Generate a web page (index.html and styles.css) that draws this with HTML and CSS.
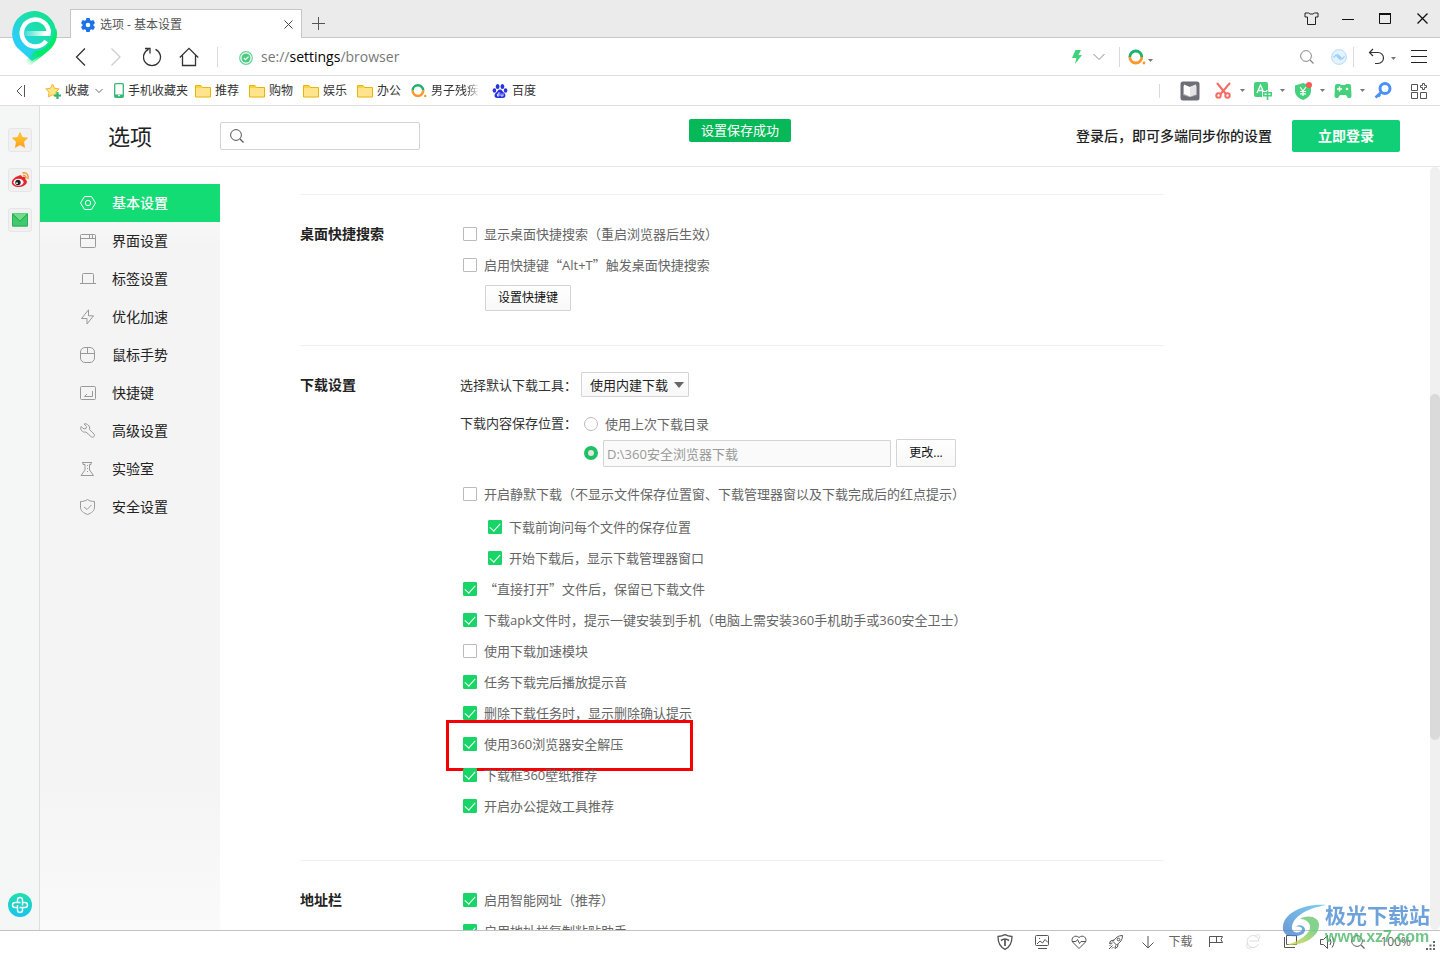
FILE: index.html
```html
<!DOCTYPE html>
<html lang="zh-CN">
<head>
<meta charset="utf-8">
<title>选项 - 基本设置</title>
<link rel="stylesheet" href="styles.css">
</head>
<body>
<svg class="defs" aria-hidden="true">
  <defs>
    <symbol id="folder" viewBox="0 0 16 16"><path d="M.5 14V2.500h5.500l1.500 2h8V14z" fill="#ffe48c" stroke="#eab308"/><path d="M1 3h4.800l1.500 2H1z" fill="#fdd23c"/></symbol>
    <symbol id="quest" viewBox="0 0 18 16"><path d="M1.800 8a6 6 0 0 1 12 0" fill="none" stroke="#19b36b" stroke-width="2.800"/><path d="M1.800 8a6 6 0 0 0 12 0" fill="none" stroke="#fb9a2c" stroke-width="2.800"/><circle cx="16" cy="14" r="1.400" fill="#fb9a2c"/></symbol>
    <symbol id="caret" viewBox="0 0 5 3"><path d="M0 0h5L2.500 3z" fill="#777"/></symbol>
    <symbol id="lens" viewBox="0 0 14 14"><circle cx="6" cy="6" r="5.400" fill="none" stroke="currentColor"/><path d="M10 10l3.500 3.500" stroke="currentColor" stroke-width="1.200"/></symbol>
    <linearGradient id="brand" x1="0" y1="1" x2="1" y2="0"><stop offset="0" stop-color="#28d0ff"/><stop offset=".3" stop-color="#28d0f0"/><stop offset=".6" stop-color="#1cdfae"/><stop offset="1" stop-color="#0be383"/></linearGradient>
    <linearGradient id="brandTail" gradientUnits="userSpaceOnUse" x1="36" y1="36" x2="18" y2="56"><stop offset="0" stop-color="#02ea68"/><stop offset=".4" stop-color="#02ea68"/><stop offset="1" stop-color="#02ea68" stop-opacity="0"/></linearGradient>
    <linearGradient id="brandBar" x1="0" x2="1"><stop offset="0" stop-color="#fff" stop-opacity=".1"/><stop offset=".8" stop-color="#fff"/></linearGradient>
    <linearGradient id="gold" x1="0" y1="0" x2="0" y2="1"><stop offset="0" stop-color="#ffd32e"/><stop offset="1" stop-color="#ff9d1c"/></linearGradient>
    <linearGradient id="aqua" x1="0" y1="0" x2="0" y2="1"><stop offset="0" stop-color="#20e0ac"/><stop offset="1" stop-color="#17c4ee"/></linearGradient>
    <linearGradient id="swooshBlue" x1="0" y1="1" x2="1" y2="0"><stop offset="0" stop-color="#477fca"/><stop offset="1" stop-color="#5bc4ef"/></linearGradient>
    <linearGradient id="swooshGreen" x1="0" y1="1" x2="1" y2="0"><stop offset="0" stop-color="#e5d83e"/><stop offset=".7" stop-color="#66c873"/></linearGradient>
  </defs>
</svg>

<header class="titlebar">
  <svg class="brand" width="48" height="58" viewBox="0 0 48 58" aria-hidden="true">
    <path d="M23.500 1A22.500 22.500 0 0 0 6 37.500L21 51l17-11a22.500 22.500 0 0 0-14.500-39z" fill="url(#brand)"/>
    <path d="M45 18c3 9-1 18-9 24L20 55l-10 1 14-15c9 0 17-7 21-23z" fill="url(#brandTail)"/>
    <path d="M37.800 23.500a13.500 13.500 0 1 0-2.600 7.500" fill="none" stroke="#fff" stroke-width="4.500"/>
    <path d="M13 21h26.500v5H13z" fill="url(#brandBar)"/>
  </svg>
  <div class="tab">
    <svg width="14" height="14" viewBox="0 0 14 14"><path d="M5.300 0h3.400l.4 2 1.300.8 2-.7L14 5l-1.500 1.400v1.300L14 9l-1.700 2.900-2-.7-1.200.8-.4 2H5.300l-.4-2-1.200-.8-2 .7L0 9l1.500-1.300V6.400L0 5l1.700-2.900 2 .7L5 2zM7 4.700a2.300 2.300 0 1 0 0 4.600 2.300 2.300 0 0 0 0-4.600z" fill="#1a73e8" fill-rule="evenodd"/></svg>
    <span class="tab-title">选项 - 基本设置</span>
    <button class="icon-btn" aria-label="关闭标签"><svg width="9" height="9" viewBox="0 0 9 9"><path d="M.5.500l8 8M8.500.500l-8 8" stroke="#444"/></svg></button>
  </div>
  <button class="icon-btn new-tab" aria-label="新标签"><svg width="13" height="13" viewBox="0 0 13 13"><path d="M6.500 0v13M0 6.500h13" stroke="#555"/></svg></button>
  <div class="window-controls">
    <button class="icon-btn" aria-label="皮肤"><svg width="15" height="13" viewBox="0 0 15 13"><path d="M1 1h3.500l1.500 1h3l1.500-1H14v4h-2.500v7.500h-8V5H1z" fill="none" stroke="#222"/></svg></button>
    <button class="icon-btn" aria-label="最小化"><svg width="12" height="13" viewBox="0 0 12 13"><path d="M0 7.500h12" stroke="#111"/></svg></button>
    <button class="icon-btn" aria-label="最大化"><svg width="12" height="11" viewBox="0 0 12 11"><path d="M.5 1v9.500h11V1" fill="none" stroke="#111"/><path d="M0 1h12" stroke="#111" stroke-width="2"/></svg></button>
    <button class="icon-btn" aria-label="关闭"><svg width="11" height="11" viewBox="0 0 11 11"><path d="M.5.500l10 10M10.500.500l-10 10" stroke="#111" stroke-width="1.300"/></svg></button>
  </div>
</header>

<div class="addressbar">
  <div class="nav-buttons">
    <button class="icon-btn" aria-label="后退"><svg width="20" height="20" viewBox="0 0 20 20"><path d="M14 1.500L5.500 10l8.500 8.500" fill="none" stroke="#333" stroke-width="1.300"/></svg></button>
    <button class="icon-btn" aria-label="前进"><svg width="20" height="20" viewBox="0 0 20 20"><path d="M4.500 1.500L13 10l-8.500 8.500" fill="none" stroke="#ccc" stroke-width="1.300"/></svg></button>
    <button class="icon-btn" aria-label="刷新"><svg width="20" height="20" viewBox="0 0 20 20"><path d="M12.500 2.300A8.500 8.500 0 1 1 5.500 2.300M2 1.500h5v5" fill="none" stroke="#333" stroke-width="1.300"/></svg></button>
    <button class="icon-btn" aria-label="主页"><svg width="20" height="20" viewBox="0 0 20 20"><path d="M.8 10.500L10 1.300l9.200 9.200M3.500 8.500v10h13v-10" fill="none" stroke="#333" stroke-width="1.300"/></svg></button>
  </div>
  <span class="divider"></span>
  <svg class="secure" width="14" height="14" viewBox="0 0 14 14"><circle cx="7" cy="7" r="6.300" fill="none" stroke="#62d493" stroke-width="1.200"/><circle cx="7" cy="7" r="4.500" fill="#4acb80"/><path d="M4.800 7l1.700 1.600 3-3" fill="none" stroke="#fff" stroke-width="1.200"/></svg>
  <span class="url">se://<b>settings</b>/browser</span>
  <div class="address-tools">
    <svg width="10" height="14" viewBox="0 0 10 14"><path d="M3.500 0H9L6.500 5H10L3 14l1.300-6H0z" fill="#3fd17b"/></svg>
    <svg class="tool-chevron" width="12" height="8" viewBox="0 0 12 8"><path d="M.5 1L6 6.500 11.500 1" fill="none" stroke="#888"/></svg>
    <span class="divider"></span>
    <svg class="tool-quest" width="18" height="16"><use href="#quest"/></svg>
    <svg class="quest-caret" width="5" height="3"><use href="#caret"/></svg>
  </div>
  <svg class="search-lens" width="14" height="14"><use href="#lens"/></svg>
  <svg class="sync" width="16" height="16" viewBox="0 0 16 16"><circle cx="8" cy="8" r="7.400" fill="#e4f3ff" stroke="#b5dbff"/><path d="M2.500 8.500L5 6l5 5M13.500 7.500L11 10 6 5" fill="none" stroke="#9ccdff" stroke-width="1.200"/><path d="M8 6l2 2-2 2-2-2z" fill="#9ccdff"/></svg>
  <span class="divider sync-divider"></span>
  <button class="icon-btn" aria-label="恢复"><svg width="17" height="17" viewBox="0 0 17 17"><path d="M5 1L1.500 4.500 5 8M1.500 4.500h8.500a5.500 5.500 0 0 1 0 11H7" fill="none" stroke="#333" stroke-width="1.200"/></svg></button>
  <svg class="undo-caret" width="5" height="3"><use href="#caret"/></svg>
  <button class="icon-btn menu" aria-label="菜单"><svg width="16" height="13" viewBox="0 0 16 13"><path d="M0 .5h16M0 6.500h16M0 12.500h16" stroke="#222"/></svg></button>
</div>

<nav class="bookmarks" aria-label="收藏栏">
  <button class="icon-btn collapse" aria-label="收起"><svg width="10" height="12" viewBox="0 0 10 12"><path d="M6 1L1 6l5 5M8.500 0v12" fill="none" stroke="#555"/></svg></button>
  <a class="bookmark" href="#"><svg width="16" height="16" viewBox="0 0 16 16"><path d="M7.500 1l2 4.300 4.700.6-3.400 3.300.8 4.800-4.100-2.200L3.300 14l.8-4.800L.7 5.900l4.700-.6z" fill="#ffe680" stroke="#efb63b"/><path d="M12.500 9v7M9 12.500h7" stroke="#34b56d" stroke-width="2.200"/></svg><span>收藏</span><svg class="fav-chevron" width="8" height="6" viewBox="0 0 8 6"><path d="M.5 1L4 4.500 7.500 1" fill="none" stroke="#666"/></svg></a>
  <a class="bookmark phone" href="#"><svg width="10" height="15" viewBox="0 0 10 15"><rect x=".7" y=".7" width="8.600" height="13.600" rx="1" fill="#fff" stroke="#35b870" stroke-width="1.300"/><path d="M1 11.500h8V14H1z" fill="#35b870"/><path d="M4 12.700h2" stroke="#fff"/></svg><span>手机收藏夹</span></a>
  <a class="bookmark" href="#"><svg width="16" height="16"><use href="#folder"/></svg><span>推荐</span></a>
  <a class="bookmark" href="#"><svg width="16" height="16"><use href="#folder"/></svg><span>购物</span></a>
  <a class="bookmark" href="#"><svg width="16" height="16"><use href="#folder"/></svg><span>娱乐</span></a>
  <a class="bookmark" href="#"><svg width="16" height="16"><use href="#folder"/></svg><span>办公</span></a>
  <a class="bookmark" href="#"><svg width="16" height="16" viewBox="0 0 18 17"><use href="#quest" width="18" height="16"/></svg><span class="fade">男子残疾</span></a>
  <a class="bookmark" href="#"><svg width="16" height="16" viewBox="0 0 16 16" fill="#2932e1"><ellipse cx="5.600" cy="3.500" rx="1.900" ry="2.600"/><ellipse cx="10.400" cy="3.500" rx="1.900" ry="2.600"/><ellipse cx="2.400" cy="7.500" rx="1.800" ry="2.300"/><ellipse cx="13.600" cy="7.500" rx="1.800" ry="2.300"/><path d="M8 6.500c2 0 2.500 2 4 3.300 2.500 2.200 1.500 5.200-1 5.200H5c-2.500 0-3.500-3-1-5.200C5.500 8.500 6 6.500 8 6.500z"/><path d="M7 9v4H5.500v-2H7M9 10.500v2.500h2v-2.500" fill="none" stroke="#fff" stroke-width=".8"/></svg><span>百度</span></a>
  <div class="plugins">
    <span class="divider"></span>
    <button class="icon-btn reader" aria-label="阅读"><svg width="20" height="20" viewBox="0 0 20 20"><rect x=".5" y=".5" width="19" height="19" rx="2.500" fill="#6c6f78"/><path d="M3 5l2-1v9l5 2 5-2V4l2 1v9l-6 2H9l-6-2z" fill="#a9abb0"/><path d="M4 3.500l6 2.500 6-2.500V13l-6 2.500L4 13z" fill="#fff"/><path d="M10 6l6-2.500V13l-6 2.500z" fill="#e4e4e4"/></svg></button>
    <button class="icon-btn plugin" aria-label="截图"><svg width="18" height="18" viewBox="0 0 18 18" fill="none" stroke="#fa6b63" stroke-width="2"><path d="M3 1l9 11M16 1L6.500 12"/><circle cx="4.500" cy="13.500" r="2.200"/><circle cx="13.500" cy="13.500" r="2.200"/></svg><svg width="5" height="3"><use href="#caret"/></svg></button>
    <button class="icon-btn plugin" aria-label="翻译"><svg width="18" height="18" viewBox="0 0 18 18"><rect width="14" height="15" rx="2" fill="#45d07c"/><path d="M3 11l3.500-8L10 11M4.500 8.500h4" fill="none" stroke="#fff" stroke-width="1.300"/><path d="M9.500 10.500h8v3.500h-8zM13.500 8v10" fill="#fff" stroke="#fff" stroke-width="3"/><path d="M9.700 10.700h7.600v3H9.700zM13.500 8.500V18" fill="none" stroke="#45d07c" stroke-width="1.600"/></svg><svg width="5" height="3"><use href="#caret"/></svg></button>
    <button class="icon-btn plugin" aria-label="网购"><svg width="18" height="18" viewBox="0 0 18 18"><path d="M9 1l8 2.500V9c0 4-3.500 7.500-8 9-4.500-1.500-8-5-8-9V3.500z" fill="#45d07c"/><path d="M6 5l3 4 3-4M9 9v5M6 9.500h6M6 11.800h6" fill="none" stroke="#fff" stroke-width="1.200"/><circle cx="15" cy="3" r="3" fill="#fc5a52"/></svg><svg width="5" height="3"><use href="#caret"/></svg></button>
    <button class="icon-btn plugin" aria-label="游戏"><svg width="18" height="18" viewBox="0 0 18 18"><path d="M3 2h3l1 1h4l1-1h3q2 0 2 2l.5 10q0 2-2 2H14l-2-3h-6l-2 3H2.500q-2 0-2-2L1 4q0-2 2-2z" fill="#45d07c"/><path d="M5.500 4.500v5M3 7h5" stroke="#fff" stroke-width="1.400"/><circle cx="13" cy="7" r="1.300" fill="#fff"/></svg><svg width="5" height="3"><use href="#caret"/></svg></button>
    <button class="icon-btn key" aria-label="登录管家"><svg width="18" height="18" viewBox="0 0 18 18" fill="none" stroke="#4a90f8"><circle cx="11" cy="6.500" r="5" stroke-width="3"/><path d="M7.500 10L1.500 15.500M4 12.500l2 2" stroke-width="2.700"/></svg></button>
    <button class="icon-btn grid" aria-label="扩展中心"><svg width="16" height="16" viewBox="0 0 16 16" fill="none" stroke="#555"><path d="M.5 1.500h6v6h-6zM.5 9.500h6v6h-6zM9.500 9.500h6v6h-6z"/><path d="M11.500.500h2v2h2v2h-2v2h-2v-2h-2v-2h2z"/></svg></button>
  </div>
</nav>

<main class="workspace">
  <aside class="rail">
    <button class="rail-btn" aria-label="收藏"><svg width="16" height="16" viewBox="0 0 16 16"><path d="M8 .5l2.300 5 5.200.6-3.900 3.700 1.100 5.600L8 12.800l-4.700 2.600 1.100-5.600L.5 6.100l5.200-.6z" fill="url(#gold)" stroke="#f5a623" stroke-width=".6"/></svg></button>
    <button class="rail-btn" aria-label="微博"><svg width="18" height="18" viewBox="0 0 18 18"><path d="M7 5c2-1 4-1 4 1 3-.8 4 .5 3.300 2.300C18 10.500 15 16 8 16 3.500 16 .8 14 .8 11.500.800 9 4 6 7 5z" fill="#e6242b"/><ellipse cx="7.500" cy="11.300" rx="5" ry="3.500" fill="#fff"/><circle cx="7" cy="11.500" r="2.700" fill="#222"/><circle cx="6" cy="12.200" r=".9" fill="#fff"/><path d="M12 4.500c2-.5 3.300 1 2.800 3M11.500 2c4-1 6.500 2 5.300 6" fill="none" stroke="#f4962b" stroke-width="1.400"/></svg></button>
    <button class="rail-btn" aria-label="邮箱"><svg width="16" height="14" viewBox="0 0 16 14"><rect width="16" height="13.500" rx="1" fill="#3fca6b"/><path d="M.5.500h15L8 8z" fill="#72dc8b"/><path d="M.5.800L8 8.300l7.500-7.500" fill="none" stroke="#1fa24d"/><path d="M.5 1v12h15V1" fill="none" stroke="#28ae53"/></svg></button>
    <button class="icon-btn rail-add" aria-label="添加"><svg width="24" height="24" viewBox="0 0 24 24"><circle cx="12" cy="12" r="12" fill="url(#aqua)"/><path d="M9.500 14.500H7a2.500 2.500 0 0 1 0-5h5.500M9.500 9.500v-2.500a2.500 2.500 0 0 1 5 0v5.500M14.500 9.500H17a2.500 2.500 0 0 1 0 5h-5.500M14.500 14.500V17a2.500 2.500 0 0 1-5 0v-5" fill="none" stroke="#fff" stroke-width="1.400"/></svg></button>
  </aside>

  <div class="page">
    <header class="page-header">
      <h1>选项</h1>
      <label class="search"><svg width="14" height="14"><use href="#lens"/></svg><input type="text" aria-label="搜索设置"></label>
      <div class="login">
        <span>登录后，即可多端同步你的设置</span>
        <button class="login-btn">立即登录</button>
      </div>
      <div class="toast" role="status">设置保存成功</div>
    </header>

    <div class="page-body">
      <nav class="sidebar" aria-label="设置分类">
        <a class="active" href="#"><svg width="16" height="16" viewBox="0 0 16 16"><path d="M4.500 1.500h7L15.500 8l-4 6.500h-7L.5 8z"/><circle cx="8" cy="8" r="2.700"/></svg>基本设置</a>
        <a href="#"><svg width="16" height="16" viewBox="0 0 16 16"><rect x=".5" y="1.500" width="15" height="13" rx="1"/><path d="M1 5.500h14M9.500 2v3M12.500 2v3"/></svg>界面设置</a>
        <a href="#"><svg width="16" height="16" viewBox="0 0 16 16"><path d="M0 12.500h16M2.500 12V3.500q0-1 1-1h9q1 0 1 1V12"/></svg>标签设置</a>
        <a href="#"><svg width="16" height="16" viewBox="0 0 16 16"><path d="M8.500.800v6h5L7 15V9.500H1.500z"/></svg>优化加速</a>
        <a href="#"><svg width="16" height="16" viewBox="0 0 16 16"><rect x=".5" y=".5" width="14" height="15" rx="4.500"/><path d="M.5 6.500h14M7.500.500v6"/></svg>鼠标手势</a>
        <a href="#"><svg width="16" height="16" viewBox="0 0 16 16"><rect x=".5" y="1.500" width="15" height="13" rx="1"/><path d="M12.500 6v5.500h-8L7 9"/></svg>快捷键</a>
        <a href="#"><svg width="16" height="16" viewBox="0 0 16 16"><path d="M4 1l2.500 2.500-.5 2-2 .5L1 3.500C-.3 6.500 2.500 10 6 9l5 4.500c2 2 4.500-.5 3-2.500L9.500 6.500C10.500 3 7 0 4 1z"/></svg>高级设置</a>
        <a href="#"><svg width="16" height="16" viewBox="0 0 16 16"><path d="M2 1.500h10M3 1.500v2h2V9l-4 5.500h12.500L9.500 9V3.500H11v-2"/><path d="M7.500 4v1M7.500 7v1M7.500 10v1"/></svg>实验室</a>
        <a href="#"><svg width="16" height="16" viewBox="0 0 16 16"><path d="M7.500.500C9.500 2 12 2.500 14.500 2.500V8c0 4-3 6-7 7.500C3.500 14 .5 12 .5 8V2.500C3 2.500 5.500 2 7.500.500z"/><path d="M4 8l3 2.500L11.500 6"/></svg>安全设置</a>
      </nav>

      <div class="content">
        <section class="group">
          <h2>桌面快捷搜索</h2>
          <div class="options">
            <label class="option"><input type="checkbox">显示桌面快捷搜索（重启浏览器后生效）</label>
            <label class="option"><input type="checkbox"><span>启用快捷键<q>“</q>Alt+T<q>”</q>触发桌面快捷搜索</span></label>
            <button class="btn hotkey">设置快捷键</button>
          </div>
        </section>

        <section class="group downloads">
          <h2>下载设置</h2>
          <div class="options">
            <div class="field">
              <label class="field-label" for="tool">选择默认下载工具：</label>
              <span class="select"><select id="tool"><option>使用内建下载</option></select><svg width="10" height="6" viewBox="0 0 10 6"><path d="M0 0h10L5 6z" fill="#666"/></svg></span>
            </div>
            <div class="location">
              <span class="field-label">下载内容保存位置：</span>
              <div>
                <label class="radio-row"><input type="radio" name="dir">使用上次下载目录</label>
                <div class="path-row">
                  <input type="radio" name="dir" checked aria-label="使用指定目录">
                  <input class="path" type="text" value="D:\360安全浏览器下载" disabled aria-label="下载目录">
                  <button class="btn change">更改...</button>
                </div>
              </div>
            </div>
            <label class="option"><input type="checkbox">开启静默下载（不显示文件保存位置窗、下载管理器窗以及下载完成后的红点提示）</label>
            <div class="nested">
              <label class="option"><input type="checkbox" checked>下载前询问每个文件的保存位置</label>
              <label class="option"><input type="checkbox" checked>开始下载后，显示下载管理器窗口</label>
            </div>
            <label class="option"><input type="checkbox" checked><span><q>“</q>直接打开<q>”</q>文件后，保留已下载文件</span></label>
            <label class="option"><input type="checkbox" checked>下载apk文件时，提示一键安装到手机（电脑上需安装360手机助手或360安全卫士）</label>
            <label class="option"><input type="checkbox">使用下载加速模块</label>
            <label class="option"><input type="checkbox" checked>任务下载完后播放提示音</label>
            <label class="option"><input type="checkbox" checked>删除下载任务时，显示删除确认提示</label>
            <label class="option marked"><input type="checkbox" checked>使用360浏览器安全解压</label>
            <label class="option"><input type="checkbox" checked>下载框360壁纸推荐</label>
            <label class="option"><input type="checkbox" checked>开启办公提效工具推荐</label>
          </div>
        </section>

        <section class="group">
          <h2>地址栏</h2>
          <div class="options">
            <label class="option"><input type="checkbox" checked>启用智能网址（推荐）</label>
            <label class="option"><input type="checkbox" checked>启用地址栏复制粘贴助手</label>
          </div>
        </section>
      </div>
      <div class="scrollbar"><div class="thumb"></div></div>
    </div>
  </div>
</main>

<footer class="statusbar">
  <svg width="16" height="16" viewBox="0 0 16 16"><path d="M8 .7c2 1 4.500 1.600 7 1.800C15 9 13 13 8 15.300 3 13 1 9 1 2.500 3.500 2.300 6 1.700 8 .7z" stroke-width="1.300"/><path d="M4 6.500q4-3 8 0M8 5v7" stroke-width="1.700"/></svg>
  <svg width="16" height="16" viewBox="0 0 16 16"><rect x="1.500" y="1.500" width="13" height="10" rx="1"/><path d="M3 10l3-3 2.500 2L11 5.500l3 3M4 14.500h9M5 4.500h1"/></svg>
  <svg width="16" height="16" viewBox="0 0 16 16"><path d="M8 14.500L1.500 8C-.5 4 4 0 8 3.500 12 0 16.500 4 14.500 8z"/><path d="M1 7.500h4l1.500-2 2 4L10 7.500h5"/></svg>
  <svg width="16" height="16" viewBox="0 0 16 16"><path d="M14.500 1.500C10 1.500 7.500 4 5 7.500L8.500 11c3.500-2.500 6-5 6-9.500zM6 6L2.500 7l-1 2.500 3-.5M10 10l-.5 3L7 14.500 7.500 11.500M4.500 11.500l-3.500 3.500M3 10.500l-1.500 1.500M5.500 13L4 14.500"/><circle cx="10.500" cy="5.500" r="1.300"/></svg>
  <button class="download"><svg width="14" height="14" viewBox="0 0 14 14"><path d="M7 1v12M1.500 7.500L7 13l5.500-5.500"/></svg>下载</button>
  <svg width="16" height="16" viewBox="0 0 16 16"><path d="M1.500 13V2.500h13l-1.500 3 1.500 3h-13M8.500 2.500v6"/></svg>
  <svg class="dim" width="16" height="16" viewBox="0 0 16 16"><path d="M13.500 10a6 6 0 1 1 .5-3H4M10 2c4-3 6-.5 4 3M3 9c-3 4-1 7 4 4"/></svg>
  <svg width="16" height="16" viewBox="0 0 16 16"><path d="M4.500 1.500h10v9h-10zM2.500 3v10.500H13"/></svg>
  <svg width="16" height="16" viewBox="0 0 16 16"><path d="M8.500 1.500v13l-4-4H1.500v-5h3zM11 5q2 3 0 6M13 2.500q4 5.500 0 11"/></svg>
  <span class="zoom"><svg width="14" height="14"><use href="#lens"/></svg>100%</span>
  <svg class="grip" width="9" height="9" viewBox="0 0 9 9"><path d="M7 0h2v2H7zM3.500 3.500h2v2h-2zM7 3.500h2v2H7zM0 7h2v2H0zM3.500 7h2v2h-2zM7 7h2v2H7z" fill="#666" stroke="none"/></svg>
</footer>

<div class="watermark">
  <svg width="46" height="42" viewBox="0 0 46 42"><path d="M18 15C26 10 38 13 37 22 36 33 22 42 4 41c12-3 25-11 24-19-1-4-4-7-10-7z" fill="url(#swooshGreen)"/><path d="M45 1C28-1 3 6 1 22 0 28 4 32 9 32c8 1 15-2 14-7-1-4-6-5-10-2 4-1 7 0 7 2 0 4-9 5-10 0C9 14 24 4 45 1z" fill="url(#swooshBlue)"/></svg>
  <div><div class="wm-name">极光下载站</div><div class="wm-url">www.xz7.com</div></div>
</div>
</body>
</html>
```

FILE: styles.css
```css
*, *::before, *::after { box-sizing: border-box; }

body {
  margin: 0;
  height: 100vh;
  display: grid;
  grid-template-rows: 38px 38px 30px minmax(0, 1fr) 24px;
  overflow: hidden;
  background: #fff;
  color: #222;
  font: 13px/20px "Open Sans", "Noto Sans CJK SC", sans-serif;
}

button, input, select { font: inherit; color: inherit; margin: 0; }
a { color: inherit; text-decoration: none; }
svg { display: block; flex: none; }
.defs { position: absolute; width: 0; height: 0; }
.icon-btn { display: flex; align-items: center; justify-content: center; padding: 0; border: 0; background: none; }
.divider { width: 1px; height: 20px; background: #d9d9d9; }

/* Title bar */
.titlebar {
  position: relative;
  display: flex;
  align-items: flex-end;
  padding-left: 70px;
  background: #ebebeb;
  box-shadow: inset 0 -1px #c6c6c6;
}
.brand { position: absolute; left: 11px; top: 10px; z-index: 2; }
.tab {
  display: flex;
  align-items: center;
  width: 232px;
  height: 29px;
  padding: 1px 8px 0 10px;
  background: #fff;
  border: 1px solid #c6c6c6;
  border-bottom: 0;
  font-size: 12px;
  color: #555;
}
.tab-title { flex: 1; margin-left: 5px; }
.new-tab { width: 33px; height: 29px; }
.window-controls { display: flex; gap: 1px; margin: 0 0 0 auto; align-self: stretch; }
.window-controls .icon-btn { width: 36px; height: 37px; }

/* Address bar */
.addressbar { display: flex; align-items: center; border-bottom: 1px solid #dedede; padding: 0 13px 0 71px; }
.nav-buttons { display: flex; gap: 16px; margin-right: 18px; }
.secure { margin: 3px 8px 0 21px; }
.url { flex: 1; font-size: 14px; color: #777; }
.url b { font-weight: 400; color: #000; }
.address-tools { display: flex; align-items: center; margin-right: 147px; }
.tool-chevron { margin: 0 14px 0 11px; }
.tool-quest { margin-left: 8px; }
.quest-caret { margin: 8px 0 0 2px; }
.search-lens { color: #888; }
.sync { margin: 0 6px 0 17px; }
.sync-divider { margin-right: 14px; }
.undo-caret { margin: 3px 15px 0 6px; }

/* Bookmarks bar */
.bookmarks { display: flex; align-items: center; gap: 10px; border-bottom: 1px solid #dedede; padding: 0 13px 0 16px; font-size: 12px; color: #333; }
.collapse { margin-right: 9px; }
.bookmark { display: flex; align-items: center; gap: 4px; white-space: nowrap; }
.fav-chevron { margin-left: 2px; }
.bookmark.phone { margin: 0 -3px 0 1px; }
.fade { -webkit-mask-image: linear-gradient(90deg, #000 75%, transparent); mask-image: linear-gradient(90deg, #000 75%, transparent); margin-right: 3px; }
.plugins { display: flex; align-items: center; margin-left: auto; }
.plugins .divider { height: 14px; margin-right: 20px; }
.reader { margin-right: 14px; }
.plugin { width: 40px; gap: 8px; justify-content: flex-start; }
.key { margin-right: 19px; }

/* Left rail */
.workspace { display: flex; min-height: 0; }
.rail { display: flex; flex-direction: column; align-items: center; gap: 16px; width: 40px; padding: 22px 0 13px; background: #f5f7f7; border-right: 1px solid #dedede; }
.rail-btn { display: flex; align-items: center; justify-content: center; width: 24px; height: 24px; padding: 0; background: #f1f1f1; border: 1px solid #e6e6e6; border-radius: 3px; }
.rail-add { margin-top: auto; }

/* Settings page */
.page { flex: 1; min-width: 0; display: flex; flex-direction: column; }
.page-header { position: relative; display: flex; align-items: center; height: 61px; padding: 0 40px 0 68px; border-bottom: 1px solid #e8e8e8; }
h1 { width: 112px; margin: 0; font-size: 22px; line-height: 32px; font-weight: 400; }
.search { display: flex; align-items: center; width: 200px; height: 28px; padding-left: 9px; border: 1px solid #d4d4d4; border-radius: 2px; color: #555; }
.search input { flex: 1; min-width: 0; height: 24px; border: 0; outline: 0; background: none; }
.login { display: flex; align-items: center; gap: 20px; margin-left: auto; font-size: 14px; font-weight: 500; }
.login-btn { width: 108px; height: 32px; padding: 0; border: 0; border-radius: 2px; background: #11cf76; color: #fff; font-weight: 700; }
.toast { position: absolute; top: 13px; left: 50%; transform: translateX(-50%); padding: 1px 12px 2px; border-radius: 2px; background: #07b858; color: #fff; white-space: nowrap; }

.page-body { flex: 1; min-height: 0; display: flex; overflow: hidden; }
.sidebar { width: 180px; padding-top: 17px; background: linear-gradient(#fff, #f4f4f4 80px, #f4f4f4 80%, #fafafa); }
.sidebar a { display: flex; align-items: center; gap: 16px; height: 38px; padding-left: 40px; font-size: 14px; color: #222; }
.sidebar svg { fill: none; stroke: #999; }
.sidebar .active { background: #13dc74; color: #fff; font-weight: 500; }
.sidebar .active svg { stroke: #fff; }

.content { flex: 1; padding: 27px 266px 0 80px; min-width: 0; }
.group { display: flex; padding: 23px 0 34px; border-top: 1px solid #f0f0f0; }
.group.downloads { padding-bottom: 39px; }
h2 { width: 160px; flex: none; margin: 0; font-size: 14px; line-height: 31px; font-weight: 700; }
.options { flex: 1; min-width: 0; color: #666; }
.option { position: relative; display: flex; align-items: center; gap: 7px; height: 31px; padding-left: 3px; white-space: nowrap; }
.nested { padding: 2px 0 0 25px; }
q { quotes: none; font-family: "Noto Sans CJK SC", sans-serif; }
q::before, q::after { content: none; }

input[type="checkbox"] { appearance: none; width: 14px; height: 14px; border: 1px solid #bbb; border-radius: 1px; background: #fff; display: grid; place-items: center; }
input[type="checkbox"]:checked { background: #19d568; border-color: #19d568; }
input[type="checkbox"]:checked::before { content: ""; width: 10px; height: 6px; border: solid #fff; border-width: 0 0 1px 1px; transform: translateY(-1px) rotate(-48deg); }
input[type="radio"] { appearance: none; flex: none; width: 14px; height: 14px; border: 1px solid #bbb; border-radius: 50%; background: #fff; }
input[type="radio"]:checked { border: 4px solid #1ec262; background: #e4e4e4; }

.btn { padding: 0; border: 1px solid #d4d4d4; border-radius: 1px; background: linear-gradient(#fff, #f8f8f8); font-size: 12px; color: #111; }
.hotkey { display: block; width: 86px; height: 26px; margin: 5px 0 0 25px; }
.field { display: flex; align-items: center; height: 31px; }
.field-label { width: 121px; flex: none; color: #333; line-height: 28px; white-space: nowrap; }
.select { display: grid; align-items: center; width: 108px; height: 25px; }
.select > * { grid-area: 1 / 1; }
.select select { appearance: none; height: 25px; padding: 0 8px; border: 1px solid #d4d4d4; border-radius: 1px; background: linear-gradient(#fff, #f8f8f8); color: #222; }
.select svg { justify-self: end; margin-right: 5px; pointer-events: none; }
.location { display: flex; margin: 9px 0 11px; }
.radio-row { display: flex; align-items: center; gap: 7px; height: 30px; padding-left: 3px; }
.path-row { display: flex; align-items: center; gap: 5px; height: 28px; padding-left: 3px; }
.path { width: 288px; height: 27px; padding: 0 3px; border: 1px solid #d4d4d4; border-radius: 1px; background: #fafafa; color: #999; }
.change { width: 60px; height: 28px; }

/* Frame drawn around the highlighted option */
.marked::after { content: ""; position: absolute; left: -14px; top: -8px; width: 247px; height: 51px; border: 3px solid #f60000; }

.scrollbar { width: 10px; flex: none; border-radius: 5px; background: #f0f0f0; }
.thumb { height: 346px; margin-top: 227px; border-radius: 5px; background: #dadada; }

/* Status bar */
.statusbar { display: flex; align-items: center; justify-content: flex-end; gap: 21px; padding: 0 5px 2px 0; border-top: 1px solid #c2c2c2; font-size: 12px; color: #666; }
.statusbar svg { fill: none; stroke: #555; }
.statusbar .dim { stroke: #ddd; }
.download { display: flex; align-items: center; gap: 13px; margin: 0 -5px 0 -4px; padding: 0; border: 0; background: none; }
.zoom { display: flex; align-items: center; gap: 15px; margin-left: -5px; }
.statusbar .grip { margin: 7px 0 0 -6px; }

.watermark { position: absolute; right: 10px; bottom: 7px; display: flex; align-items: center; opacity: .8; pointer-events: none; }
.watermark svg { margin-right: -3px; }
.wm-name { font-size: 21px; line-height: 24px; font-weight: 700; color: #4b8bd1; }
.wm-url { font: 700 16px/20px "Liberation Sans", sans-serif; color: #4cb86b; }
```
